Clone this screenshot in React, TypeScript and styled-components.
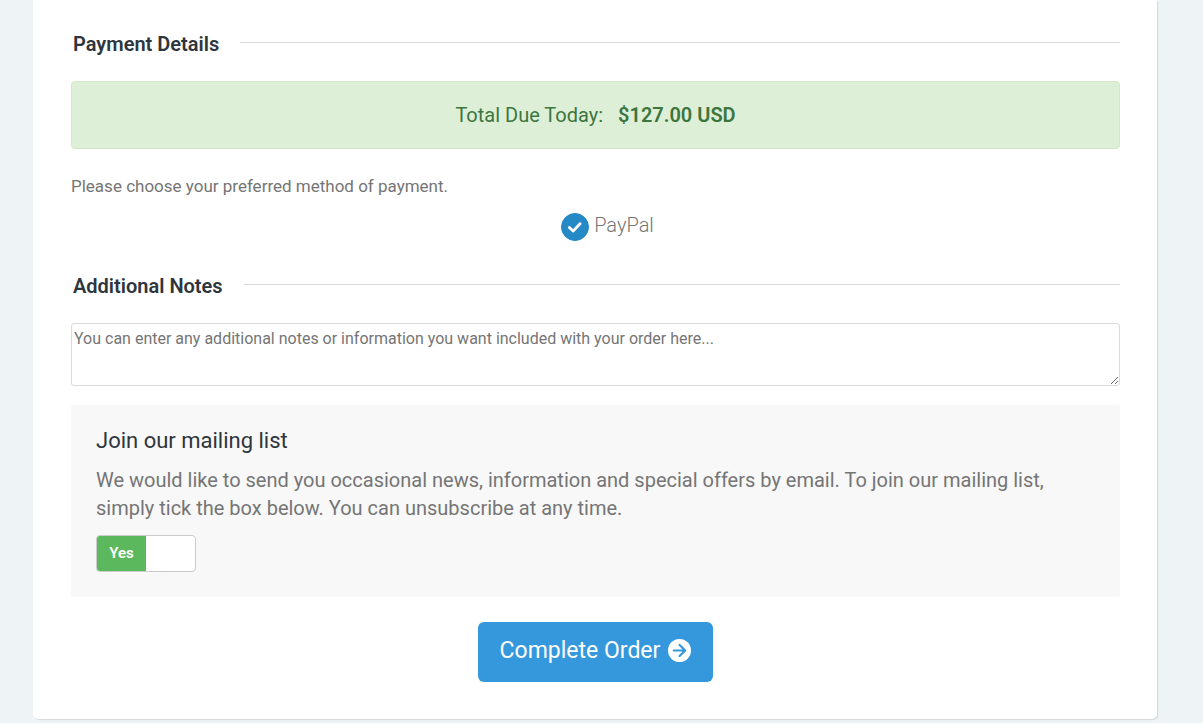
import React, { useState } from "react";
import styled, { createGlobalStyle } from "styled-components";

const GlobalStyle = createGlobalStyle`
  *, *::before, *::after { box-sizing: border-box; }
  body {
    margin: 0;
    background: #fff;
    color: #757575;
    font-family: Roboto, "Liberation Sans", sans-serif;
    font-size: 16px;
  }
`;

const Page = styled.div`
  padding: 0 46px 4px 33px;
  background: #eef3f6;
`;

const Card = styled.main`
  display: flex;
  flex-direction: column;
  padding: 30px 37px 37px 38px;
  background: #fff;
  border-radius: 0 0 5px 5px;
  box-shadow: 1px 1px 1px #d3d8dc;
`;

const SectionHeading = styled.h2`
  display: flex;
  align-items: center;
  gap: 21px;
  margin: 0;
  padding-left: 2px;
  color: #2e353d;
  font-size: 20px;
  font-weight: 600;
  line-height: 28px;

  &::after {
    content: "";
    flex: 1;
    height: 1px;
    margin-bottom: 3px;
    background: #dadada;
  }
`;

const TotalDue = styled.p`
  display: flex;
  justify-content: center;
  gap: 15px;
  margin: 23px 0 0;
  padding: 19px;
  border: 1px solid #d3e9c5;
  border-radius: 4px;
  background: #deefd8;
  color: #3c763d;
  font-size: 20px;
  line-height: 28px;
`;

const Amount = styled.strong`
  font-weight: 600;
`;

const Methods = styled.fieldset`
  display: flex;
  flex-direction: column;
  margin: 0;
  padding: 26px 0 0;
  border: 0;
`;

const MethodsLegend = styled.legend`
  float: left;
  padding: 0;
  font-size: 17px;
  line-height: 22px;
`;

const MethodOption = styled.label`
  display: flex;
  align-items: center;
  justify-content: center;
  gap: 5px;
  margin-top: 14px;
  padding-left: 24px;
  font-size: 20px;
  font-weight: 300;
  line-height: 28px;
  cursor: pointer;
`;

const MethodName = styled.span`
  padding-bottom: 3px;
`;

const RadioMark = styled.span`
  display: grid;
  width: 28px;
  height: 28px;

  > * {
    grid-area: 1 / 1;
    width: 28px;
    height: 28px;
  }
`;

const Radio = styled.input`
  appearance: none;
  margin: 0;
  border: 1px solid #2489c5;
  border-radius: 50%;
  cursor: pointer;

  &:checked { background: #2489c5; }
`;

const RadioTick = styled.svg`
  pointer-events: none;
`;

const NotesSection = styled.section`
  display: flex;
  flex-direction: column;
  gap: 23px;
  padding-top: 30px;
`;

const NotesInput = styled.textarea`
  display: block;
  width: 100%;
  height: 63px;
  padding: 5px 2px;
  border: 1px solid #dadada;
  border-radius: 3px;
  background: #fff;
  color: #555;
  font-family: inherit;
  font-size: 16px;
  line-height: 19px;
  resize: vertical;

  &::placeholder { color: #757575; }
`;

const MailingPanel = styled.section`
  display: flex;
  flex-direction: column;
  align-items: flex-start;
  margin-top: 19px;
  padding: 22px 25px 25px;
  border-radius: 3px;
  background: #f8f8f8;
`;

const PanelTitle = styled.h3`
  margin: 0;
  color: #2e353d;
  font-size: 22px;
  font-weight: 400;
  line-height: 28px;
`;

const PanelText = styled.p`
  margin: 11px 0 13px;
  font-size: 20px;
  line-height: 28px;
`;

const Switch = styled.label`
  display: grid;
  grid-template-columns: 1fr 1fr;
  width: 100px;
  height: 37px;
  overflow: hidden;
  border: 1px solid #ccc;
  border-radius: 4px;
  background: #fff;
  cursor: pointer;
`;

const SwitchInput = styled.input`
  appearance: none;
  grid-area: 1 / 1 / 2 / 3;
  margin: 0;
`;

const SwitchState = styled.span<{ $on: boolean }>`
  grid-area: ${(p) => (p.$on ? "1 / 1" : "1 / 2")};
  color: ${(p) => (p.$on ? "#fff" : "#555")};
  background: ${(p) => (p.$on ? "#5cb85c" : "#eee")};
  font-size: 15px;
  font-weight: 600;
  line-height: 35px;
  text-align: center;
`;

const SubmitButton = styled.button`
  display: flex;
  align-items: center;
  align-self: center;
  gap: 8px;
  margin-top: 25px;
  padding: 15px 22px 17px;
  border: 0;
  border-radius: 6px;
  background: #3598dc;
  color: #fff;
  font-family: inherit;
  font-size: 23px;
  line-height: 28px;
  cursor: pointer;
`;

const ArrowIcon = styled.svg`
  width: 23px;
  height: 23px;
  margin-bottom: 1px;
`;

export default function App() {
  const [subscribed, setSubscribed] = useState(true);

  return (
    <>
      <GlobalStyle />
      <Page>
        <Card>
          <SectionHeading>Payment Details</SectionHeading>
          <TotalDue>
            <span>Total Due Today:</span>
            <Amount>$127.00 USD</Amount>
          </TotalDue>
          <Methods>
            <MethodsLegend>Please choose your preferred method of payment.</MethodsLegend>
            <MethodOption>
              <RadioMark>
                <Radio type="radio" name="method" value="paypal" defaultChecked />
                <RadioTick viewBox="0 0 28 28" fill="none" aria-hidden="true">
                  <path
                    d="M8.3 14.5l3.8 3.6 7-7.4"
                    stroke="#fff"
                    strokeWidth="2.8"
                    strokeLinecap="round"
                    strokeLinejoin="round"
                  />
                </RadioTick>
              </RadioMark>
              <MethodName>PayPal</MethodName>
            </MethodOption>
          </Methods>
          <NotesSection>
            <SectionHeading id="notes-heading">Additional Notes</SectionHeading>
            <NotesInput
              aria-labelledby="notes-heading"
              placeholder="You can enter any additional notes or information you want included with your order here..."
            />
          </NotesSection>
          <MailingPanel>
            <PanelTitle id="mailing-heading">Join our mailing list</PanelTitle>
            <PanelText>
              We would like to send you occasional news, information and special offers by email. To
              join our mailing list, simply tick the box below. You can unsubscribe at any time.
            </PanelText>
            <Switch>
              <SwitchInput
                type="checkbox"
                aria-labelledby="mailing-heading"
                checked={subscribed}
                onChange={(e) => setSubscribed(e.target.checked)}
              />
              <SwitchState $on={subscribed}>{subscribed ? "Yes" : "No"}</SwitchState>
            </Switch>
          </MailingPanel>
          <SubmitButton type="submit">
            Complete Order
            <ArrowIcon viewBox="0 0 23 23" fill="none" aria-hidden="true">
              <circle cx="11.5" cy="11.5" r="11.5" fill="#fff" />
              <path
                d="M5.8 11.5H17M11.6 6l5.6 5.5-5.6 5.5"
                stroke="#3598dc"
                strokeWidth="2.2"
                strokeLinecap="round"
                strokeLinejoin="round"
              />
            </ArrowIcon>
          </SubmitButton>
        </Card>
      </Page>
    </>
  );
}
